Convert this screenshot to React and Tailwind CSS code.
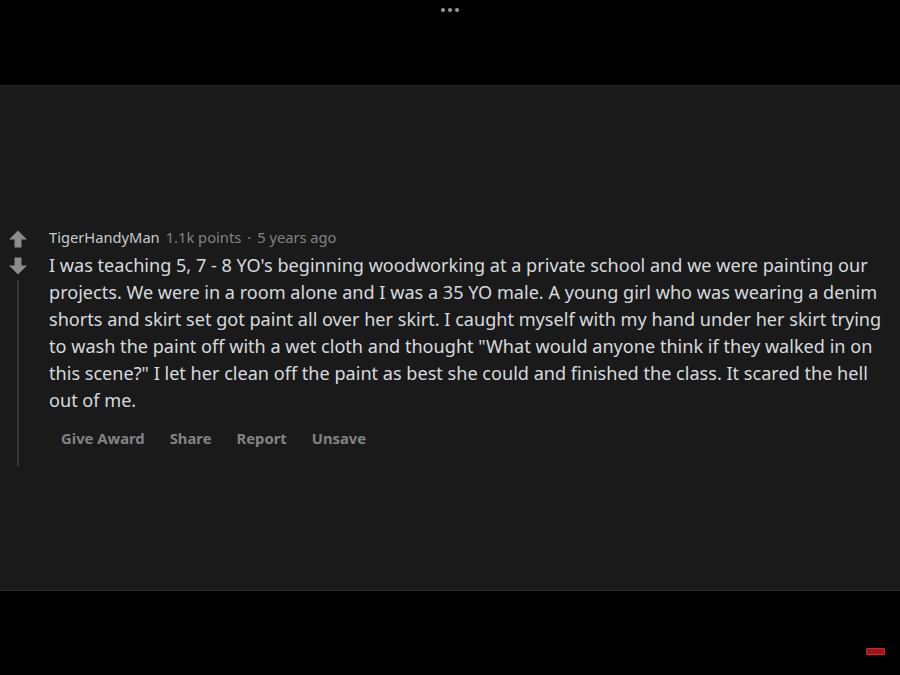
import React from 'react';

const Arrow = ({ down }) => (
  <svg width="20" height="20" viewBox="0 0 20 20" className={down ? 'rotate-180' : ''}>
    <path d="M10 1.5 L19 10.5 H13.5 V18.5 H6.5 V10.5 H1 Z" fill="#8a8c8d" />
  </svg>
);

export default function App() {
  const body =
    'I was teaching 5, 7 - 8 YO\'s beginning woodworking at a private school and we were painting our projects. We were in a room alone and I was a 35 YO male. A young girl who was wearing a denim shorts and skirt set got paint all over her skirt. I caught myself with my hand under her skirt trying to wash the paint off with a wet cloth and thought "What would anyone think if they walked in on this scene?" I let her clean off the paint as best she could and finished the class. It scared the hell out of me.';

  return (
    <div className="w-[900px] h-[675px] bg-black flex flex-col overflow-hidden" style={{ fontFamily: '"Noto Sans", sans-serif' }}>
      {/* top bar */}
      <div className="h-[85px] flex justify-center pt-[8px]">
        <div className="flex gap-[3px]">
          <span className="w-[4px] h-[4px] rounded-full bg-[#9a9a9a]" />
          <span className="w-[4px] h-[4px] rounded-full bg-[#9a9a9a]" />
          <span className="w-[4px] h-[4px] rounded-full bg-[#9a9a9a]" />
        </div>
      </div>

      {/* comment panel */}
      <div className="h-[505px] bg-[#1a1a1b] border-t border-[#222] pt-[140px] pr-[16px]">
        <div className="flex">
          <div className="w-[49px] flex flex-col items-center pr-[13px] shrink-0">
            <div className="mt-[3px]"><Arrow /></div>
            <div className="mt-[7px]"><Arrow down /></div>
            <div className="w-[2px] h-[186px] bg-[#343536] mt-[4px]" />
          </div>
          <div className="flex-1">
            <div className="text-[14.7px] leading-[22px] text-[#818384]">
              <span className="text-[#c8cbcd]">TigerHandyMan</span>
              <span className="ml-[6px]">1.1k points</span>
              <span className="mx-[6px]">·</span>
              <span>5 years ago</span>
            </div>
            <p className="text-[18.1px] leading-[27px] text-[#d7dadc] mt-[4px]">{body}</p>
            <div className="flex gap-[25px] ml-[12px] mt-[13px] text-[14.8px] font-bold text-[#818384]">
              <span>Give Award</span>
              <span>Share</span>
              <span>Report</span>
              <span>Unsave</span>
            </div>
          </div>
        </div>
      </div>

      {/* bottom bar */}
      <div className="flex-1 relative border-t border-[#2a2a2a]">
        <div className="absolute left-[866px] top-[57px] w-[19px] h-[7px] bg-[#a0141a] border border-[#d4262c] rounded-[1px]" />
      </div>
    </div>
  );
}
